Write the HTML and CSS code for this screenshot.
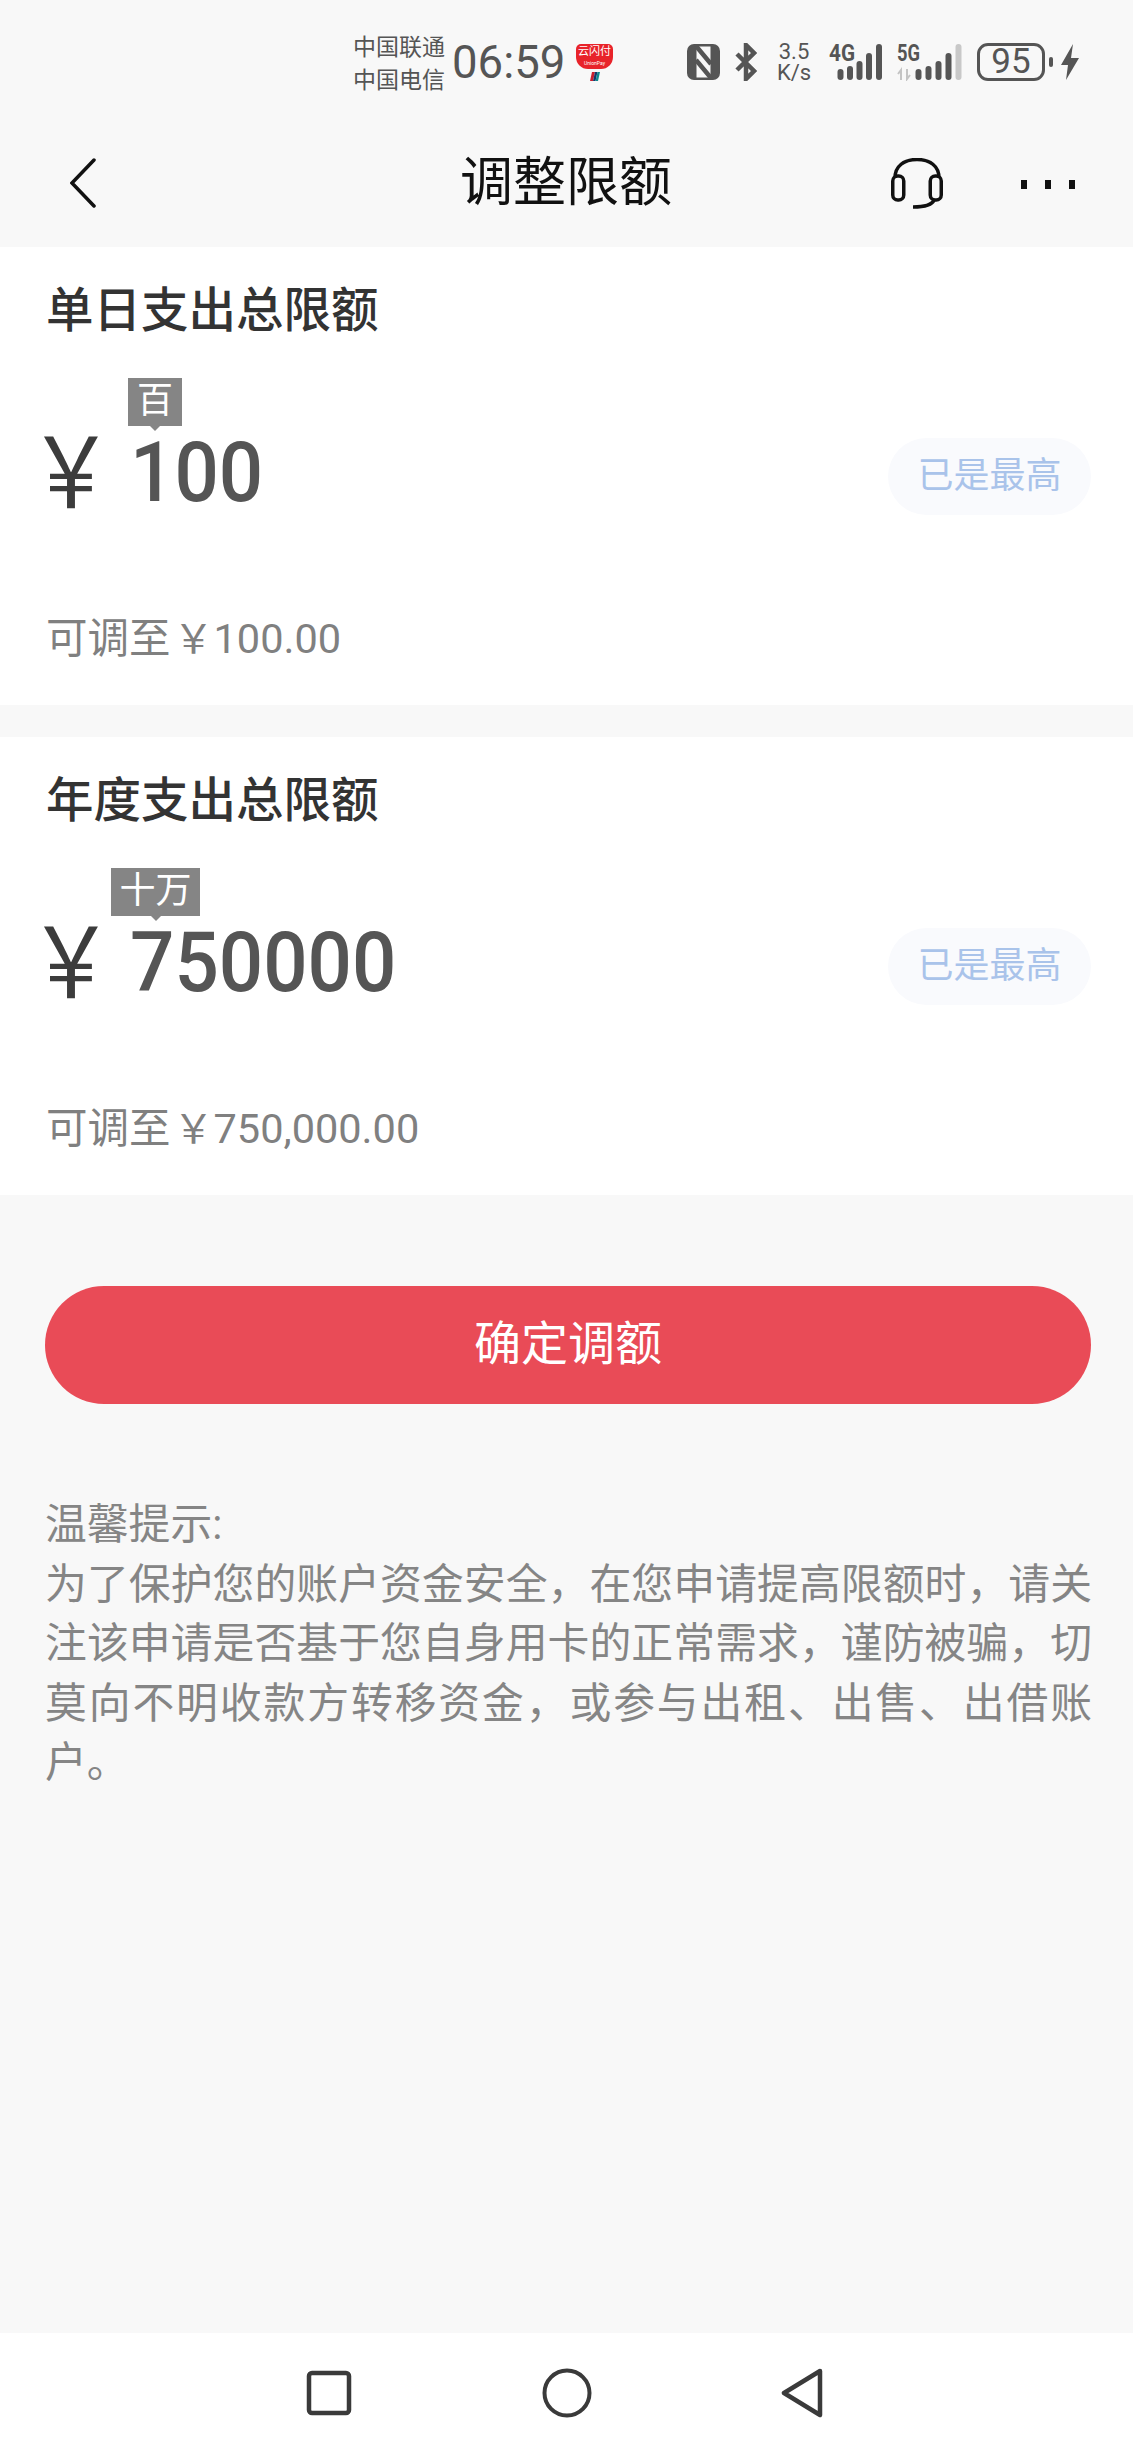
FILE: index.html
```html
<!DOCTYPE html>
<html lang="zh-CN">
<head>
    <meta charset="UTF-8">
    <meta name="viewport" content="width=device-width, initial-scale=1.0">
    <title>调整限额</title>
    <link rel="stylesheet" href="styles.css">
</head>
<body>
    <div class="page">
        <header class="top">
            <div class="status">
                <div class="carriers">
                    <span>中国联通</span>
                    <span>中国电信</span>
                </div>
                <div class="time">06:59</div>
                <div class="app-icon">
                    <div class="app-red">
                        <span class="app-name">云闪付</span>
                        <span class="app-sub">UnionPay</span>
                    </div>
                    <svg class="app-flag" width="10" height="9" viewBox="0 0 10 9">
                        <path d="M2 0h3l-2 9H0z" fill="#c8202f"/>
                        <path d="M5 0h2.500l-2 9H3z" fill="#14386b"/>
                        <path d="M7.500 0H10L8 9H5.500z" fill="#0f8a8f"/>
                    </svg>
                </div>
                <svg class="ic-nfc" width="33" height="36" viewBox="0 0 33 36">
                    <rect width="33" height="36" rx="7" fill="#555"/>
                    <rect x="9.500" y="2.500" width="14" height="31" fill="#f8f8f8"/>
                    <path d="M9 2l15 18M9 16l15 18" stroke="#555" stroke-width="4.500"/>
                </svg>
                <svg class="ic-bt" width="22" height="38" viewBox="0 0 22 38">
                    <path d="M2 11l17 17-8 8V2l8 8L2 27" fill="none" stroke="#555" stroke-width="4.500"/>
                </svg>
                <div class="speed">
                    <span>3.5</span>
                    <span>K/s</span>
                </div>
                <svg class="ic-sig" width="53" height="37" viewBox="0 0 53 37">
                    <text x="0" y="17" class="sig-label" textLength="26" lengthAdjust="spacingAndGlyphs">4G</text>
                    <rect x="8.500" y="25" width="6" height="11" rx="3" fill="#555"/>
                    <rect x="18" y="22" width="6" height="14" rx="3" fill="#555"/>
                    <rect x="27.500" y="17" width="6" height="19" rx="3" fill="#555"/>
                    <rect x="37" y="9" width="6" height="27" rx="3" fill="#555"/>
                    <rect x="47" y="0" width="6" height="36" rx="3" fill="#555"/>
                </svg>
                <svg class="ic-sig2" width="65" height="37" viewBox="0 0 65 37">
                    <text x="0" y="17" class="sig-label" textLength="23" lengthAdjust="spacingAndGlyphs">5G</text>
                    <path d="M4 36V26l-3 4M10 25v10l3-4" fill="none" stroke="#c4c4c4" stroke-width="2"/>
                    <rect x="18.500" y="25" width="6" height="11" rx="3" fill="#555"/>
                    <rect x="28.500" y="22" width="6" height="14" rx="3" fill="#555"/>
                    <rect x="38.500" y="17" width="6" height="19" rx="3" fill="#555"/>
                    <rect x="48.500" y="9" width="6" height="27" rx="3" fill="#555"/>
                    <rect x="58.500" y="0" width="6" height="36" rx="3" fill="#c8c8c8"/>
                </svg>
                <div class="battery">95</div>
                <div class="battery-nub"></div>
                <svg class="ic-bolt" width="18" height="36" viewBox="0 0 18 36">
                    <path d="M12 0L0 21h7L5 36l13-22h-8z" fill="#555"/>
                </svg>
            </div>
            <div class="title-bar">
                <svg class="back" width="26" height="50" viewBox="0 0 26 50">
                    <path d="M24 2L2 25l22 23" fill="none" stroke="#111" stroke-width="3.500" stroke-linecap="round"/>
                </svg>
                <h1>调整限额</h1>
                <svg class="headset" width="52" height="51" viewBox="0 0 52 51">
                    <path d="M4 20C4 8 13 1.500 26 1.500S48 8 48 20" fill="none" stroke="#111" stroke-width="3.500"/>
                    <rect x="1.750" y="18" width="11" height="24" rx="5" fill="none" stroke="#111" stroke-width="3.500"/>
                    <rect x="39.250" y="18" width="11" height="24" rx="5" fill="none" stroke="#111" stroke-width="3.500"/>
                    <path d="M43 42c-2 5-10 7-21 7" fill="none" stroke="#111" stroke-width="3.500"/>
                </svg>
                <div class="dots"><i></i><i></i><i></i></div>
            </div>
        </header>

        <main class="main">
            <section class="card">
                <h2>单日支出总限额</h2>
                <div class="amount-row">
                    <span class="yen">￥</span>
                    <div class="amount">
                        <span class="unit-tag unit-one">百</span>
                        <span class="amount-num">100</span>
                    </div>
                    <span class="pill">已是最高</span>
                </div>
                <p class="can-adjust">可调至<span class="sm-yen">￥</span>100.00</p>
            </section>

            <section class="card card-second">
                <h2>年度支出总限额</h2>
                <div class="amount-row">
                    <span class="yen">￥</span>
                    <div class="amount">
                        <span class="unit-tag unit-two">十万</span>
                        <span class="amount-num">750000</span>
                    </div>
                    <span class="pill">已是最高</span>
                </div>
                <p class="can-adjust">可调至<span class="sm-yen">￥</span>750,000.00</p>
            </section>

            <button class="confirm">确定调额</button>

            <div class="tips">
                <p>温馨提示:</p>
                <p class="tips-body">为了保护您的账户资金安全，在您申请提高限额时，请关注该申请是否基于您自身用卡的正常需求，谨防被骗，切莫向不明收款方转移资金，或参与出租、出售、出借账户。</p>
            </div>
        </main>

        <nav class="nav">
            <svg width="46" height="46" viewBox="0 0 46 46">
                <rect x="3" y="3" width="40" height="40" rx="3" fill="none" stroke="#3a3a3a" stroke-width="4.500"/>
            </svg>
            <svg width="50" height="50" viewBox="0 0 50 50">
                <circle cx="25" cy="25" r="22.500" fill="none" stroke="#3a3a3a" stroke-width="4"/>
            </svg>
            <svg width="42" height="50" viewBox="0 0 42 50">
                <path d="M39 3L3 25l36 22z" fill="none" stroke="#3a3a3a" stroke-width="4.500" stroke-linejoin="round"/>
            </svg>
        </nav>
    </div>
</body>
</html>
```

FILE: styles.css
```css
* {
    box-sizing: border-box;
}

body {
    margin: 0;
    font-family: Roboto, "Noto Sans CJK SC", sans-serif;
    background-color: #f8f8f8;
}

.page {
    display: flex;
    flex-direction: column;
    height: 2453px;
    overflow: hidden;
}

/* status bar + title */
.top {
    height: 247px;
    background-color: #f8f8f8;
}

.status {
    display: flex;
    align-items: flex-start;
    height: 126px;
    padding: 44px 0 0 353px;
    color: #555;
}

.carriers {
    display: flex;
    flex-direction: column;
    margin-top: -13px;
    width: 99px;
    font-size: 23px;
    line-height: 33px;
}

.time {
    margin-top: -8px;
    width: 124px;
    font-size: 45.500px;
    line-height: 54px;
}

.app-icon {
    display: flex;
    flex-direction: column;
    align-items: center;
    width: 37px;
}

.app-red {
    display: flex;
    flex-direction: column;
    align-items: center;
    width: 37px;
    height: 25px;
    border-radius: 5px 5px 12px 12px;
    background-color: #e8232a;
    color: #fff;
}

.app-name {
    font-size: 11px;
    line-height: 16px;
}

.app-sub {
    font-size: 5px;
    line-height: 6px;
}

.app-flag {
    margin-top: 3px;
}

.ic-nfc {
    margin-left: 74px;
}

.ic-bt {
    margin-left: 15px;
    margin-top: -1px;
}

.speed {
    display: flex;
    flex-direction: column;
    align-items: center;
    margin-left: 18px;
    margin-top: -3px;
    width: 38px;
    font-size: 22px;
    line-height: 21px;
}

.ic-sig {
    margin-left: 16px;
}

.ic-sig2 {
    margin-left: 15px;
}

.sig-label {
    font-family: Roboto, sans-serif;
    font-size: 23px;
    font-weight: 700;
    fill: #555;
}

.battery {
    margin-left: 15px;
    margin-top: -1px;
    width: 68px;
    height: 38px;
    border: 3px solid #555;
    border-radius: 11px;
    font-size: 35px;
    line-height: 32px;
    text-align: center;
}

.battery-nub {
    margin: 13px 0 0 4px;
    width: 4px;
    height: 10px;
    border-radius: 2px;
    background-color: #555;
}

.ic-bolt {
    margin-left: 8px;
}

.title-bar {
    display: flex;
    align-items: center;
    height: 110px;
    padding: 4px 0 0 70px;
}

.title-bar h1 {
    margin: 0;
    flex: 1;
    padding-left: 364px;
    font-size: 53px;
    line-height: 60px;
    font-weight: 400;
    color: #111;
}

.headset {
    margin-right: 78px;
}

.dots {
    display: flex;
    gap: 18px;
    margin: 2px 58px 0 0;
}

.dots i {
    width: 6px;
    height: 9px;
    background-color: #111;
}

/* cards */
.main {
    flex: 1;
}

.card {
    height: 458px;
    padding: 34px 42px 0 46px;
    background-color: #fff;
}

.card-second {
    margin-top: 32px;
}

.card h2 {
    margin: 0;
    font-size: 47.500px;
    line-height: 60px;
    font-weight: 500;
    color: #333;
}

.amount-row {
    display: flex;
    align-items: center;
    height: 100px;
    margin-top: 79px;
}

.yen {
    display: inline-block;
    margin: 10px 0 0 -18px;
    width: 100px;
    font-size: 86px;
    line-height: 100px;
    color: #3c3c3c;
    transform: scaleY(1.15);
}

.amount {
    position: relative;
    flex: 1;
    margin-top: 6px;
    font-size: 84px;
    line-height: 100px;
    font-weight: 500;
    color: #555;
}

.amount-num {
    display: inline-block;
    margin-left: 2px;
    transform: scaleX(0.93);
    transform-origin: left center;
}

.unit-tag {
    position: absolute;
    top: -45px;
    height: 48px;
    background-color: #858585;
    color: #fff;
    font-size: 36px;
    line-height: 46px;
    font-weight: 400;
    text-align: center;
}

.unit-tag::after {
    content: "";
    position: absolute;
    left: 50%;
    top: 100%;
    margin-left: -5px;
    border: 5px solid transparent;
    border-top-color: #858585;
    border-bottom: 0;
}

.unit-one {
    left: 0;
    width: 54px;
}

.unit-two {
    left: -17px;
    width: 89px;
}

.pill {
    margin-top: 13px;
    width: 203px;
    height: 77px;
    border-radius: 39px;
    background-color: #f9fafd;
    color: #a9c3ea;
    font-size: 36px;
    line-height: 77px;
    text-align: center;
}

.can-adjust {
    margin: 89px 0 0;
    font-size: 41.500px;
    line-height: 60px;
    color: #808080;
}

.sm-yen {
    margin-left: 3px;
    font-size: 40px;
}

/* button + tips */
.confirm {
    display: block;
    margin: 91px 42px 0 45px;
    padding: 0 0 12px;
    width: 1046px;
    height: 118px;
    border: none;
    border-radius: 59px;
    background-color: #e94b57;
    color: #fff;
    font-family: inherit;
    font-size: 47px;
    cursor: pointer;
}

.tips {
    margin: 91px 41px 0 45px;
    font-size: 41.800px;
    line-height: 59.500px;
    color: #858585;
}

.tips p {
    margin: 0;
}

.tips-body {
    text-align: justify;
}

/* system nav */
.nav {
    display: flex;
    align-items: center;
    justify-content: space-between;
    height: 120px;
    padding: 0 310px 0 306px;
    background-color: #fff;
}
```
